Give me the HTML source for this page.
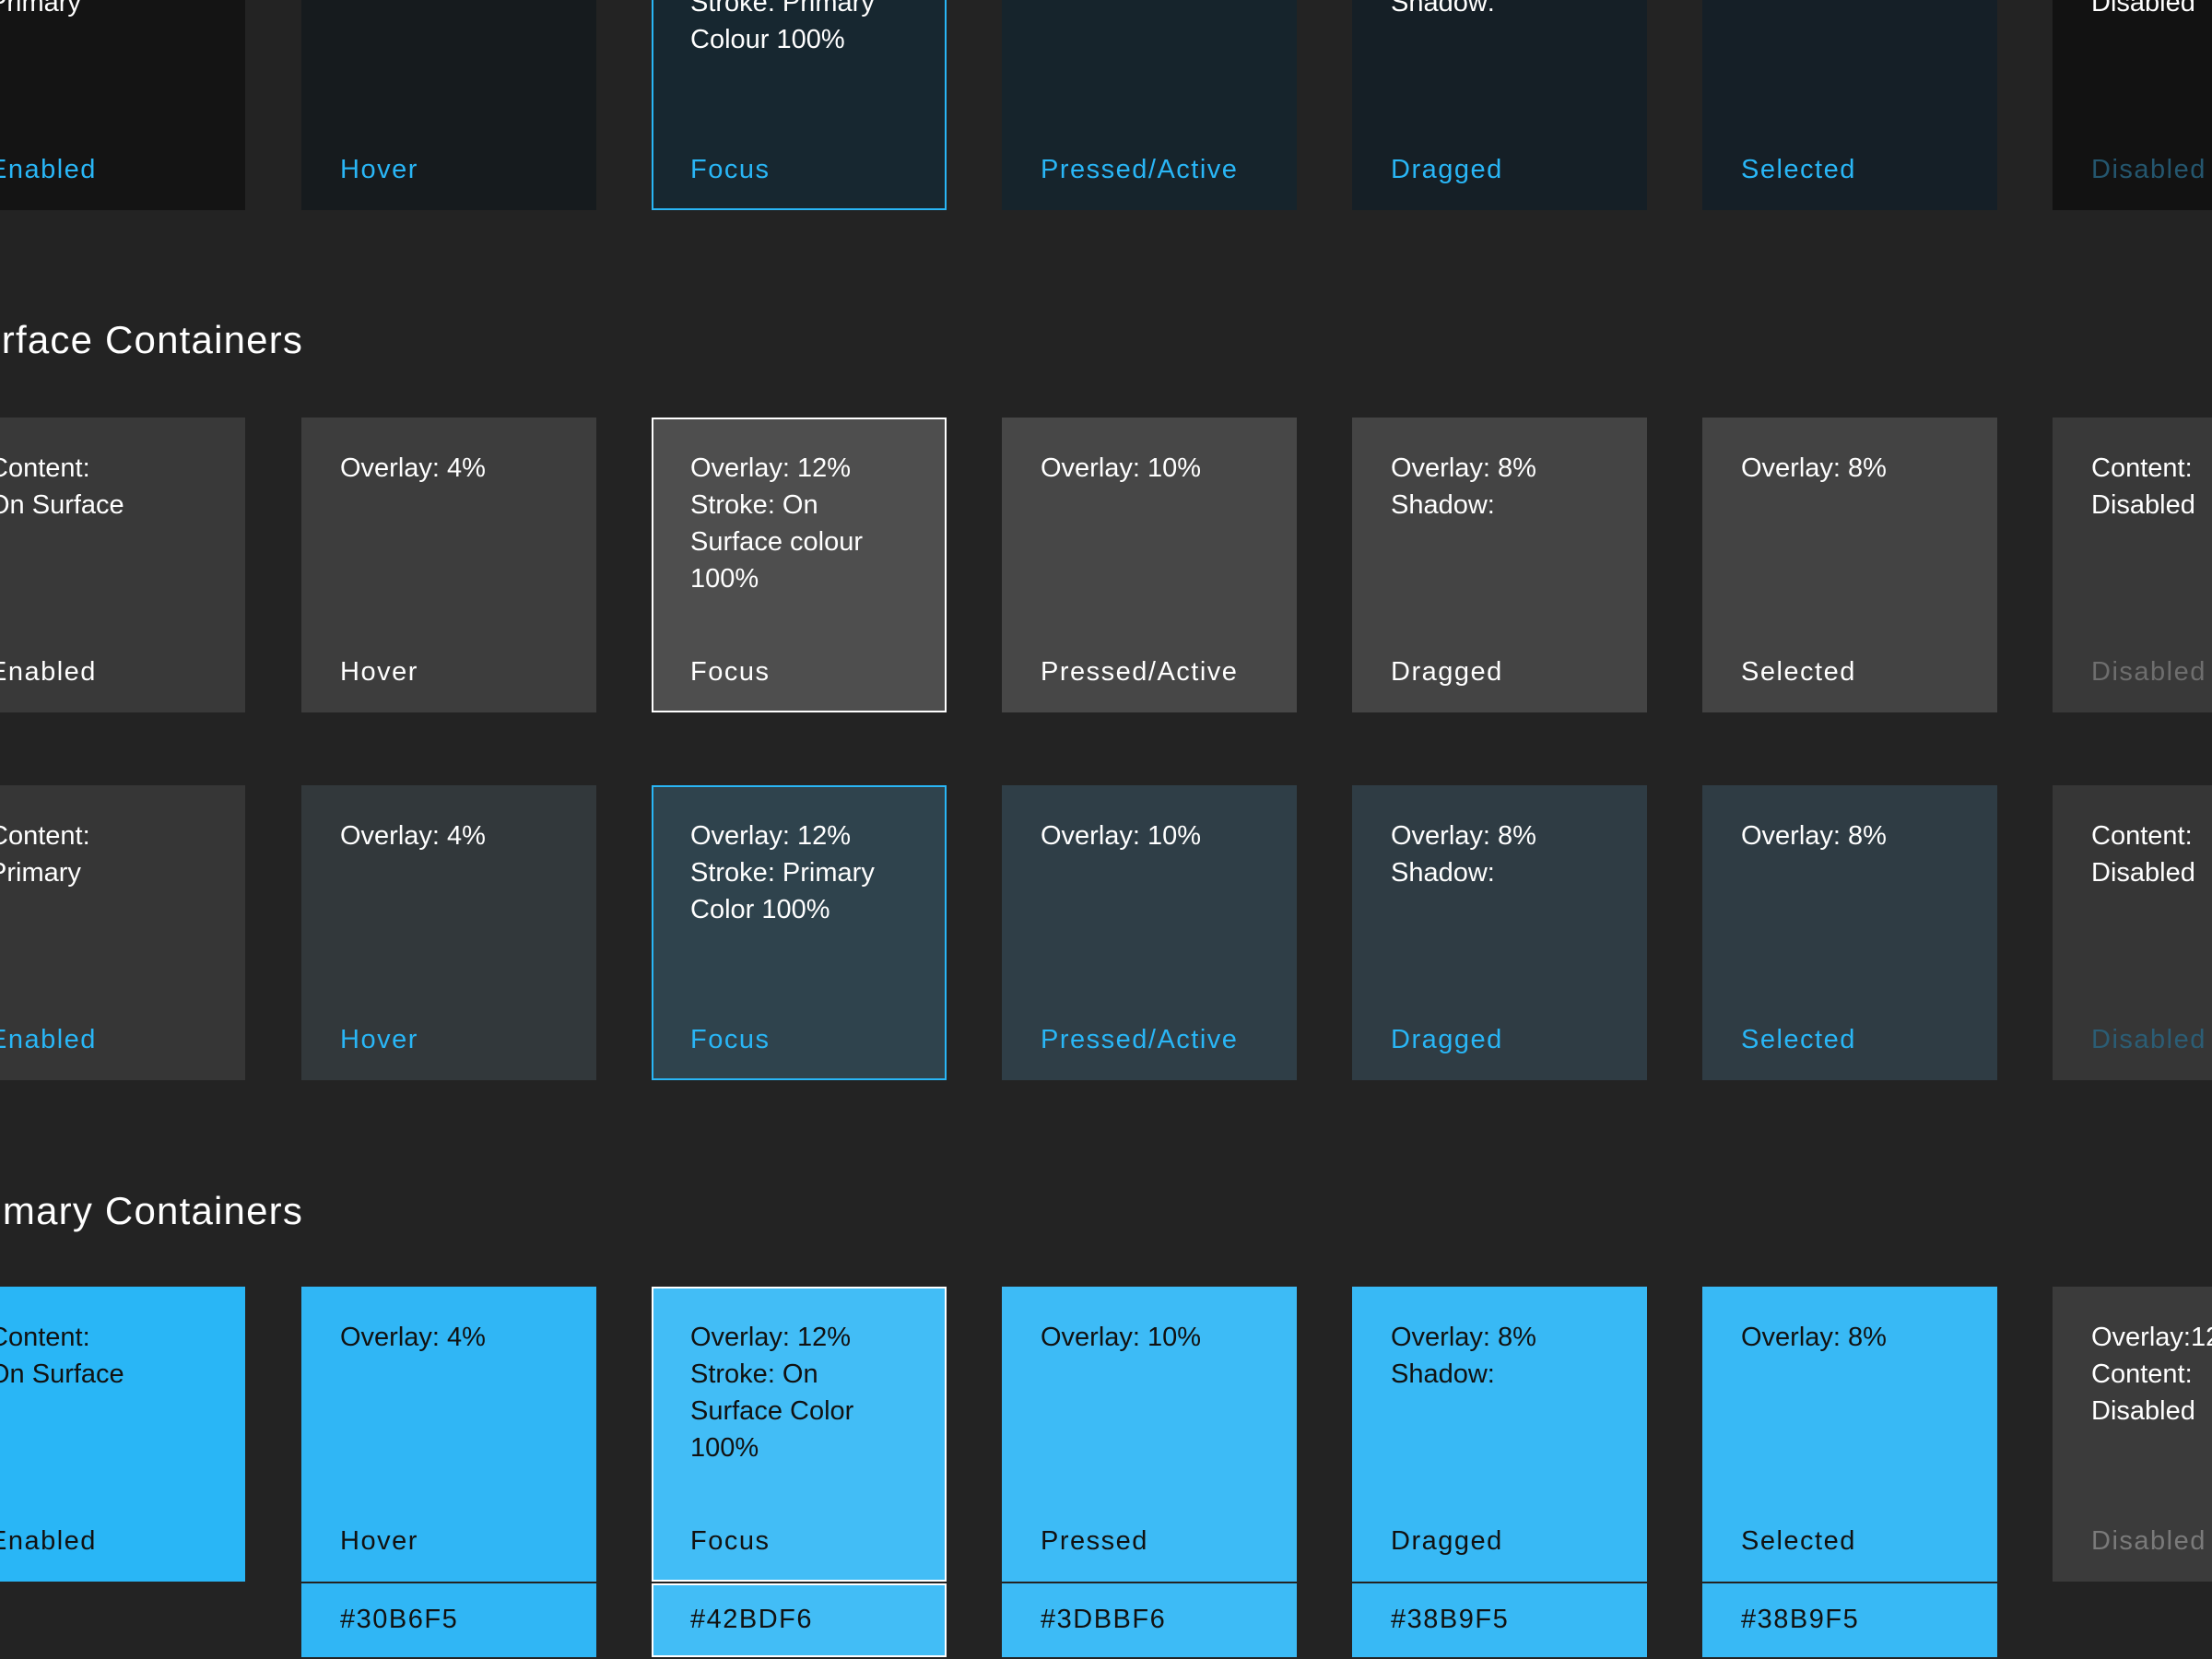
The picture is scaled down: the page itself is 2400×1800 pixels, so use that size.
<!DOCTYPE html>
<html><head><meta charset="utf-8"><style>
html,body{margin:0;padding:0;width:2400px;height:1800px;overflow:hidden;background:#232323;font-family:"Liberation Sans",sans-serif;}
.t{position:absolute;width:320px;height:320px;box-sizing:border-box;color:#fff;font-size:29px;}
.t .top{position:absolute;left:42px;top:35px;line-height:40px;}
.t .bot{position:absolute;left:42px;bottom:24px;line-height:40px;letter-spacing:1.5px;}
.b{color:#29b6f6}
.h{position:absolute;left:-52px;color:#fff;font-size:42px;letter-spacing:1.2px;}
.hex{position:absolute;width:320px;height:80px;box-sizing:border-box;color:#111;font-size:29px;letter-spacing:1.5px;padding-left:42px;line-height:78px;}
.k{color:#111}
</style></head><body>

<!-- Row 1 -->
<div class="t" style="left:-54px;top:-92px;background:#141414"><div class="top">Content:<br>Primary</div><div class="bot b">Enabled</div></div>
<div class="t" style="left:327px;top:-92px;background:#161b1e"><div class="top">Overlay: 4%</div><div class="bot b">Hover</div></div>
<div class="t" style="left:707px;top:-92px;background:#172730;border:2px solid #29b6f6"><div class="top" style="left:40px;top:33px">Overlay: 12%<br>Stroke: Primary<br>Colour 100%</div><div class="bot b" style="left:40px;bottom:22px">Focus</div></div>
<div class="t" style="left:1087px;top:-92px;background:#16242c"><div class="top">Overlay: 10%</div><div class="bot b">Pressed/Active</div></div>
<div class="t" style="left:1467px;top:-92px;background:#151f26"><div class="top">Overlay: 8%<br>Shadow:</div><div class="bot b">Dragged</div></div>
<div class="t" style="left:1847px;top:-92px;background:#151f27"><div class="top">Overlay: 8%</div><div class="bot b">Selected</div></div>
<div class="t" style="left:2227px;top:-92px;background:#121212"><div class="top">Content:<br>Disabled</div><div class="bot" style="color:#24566e">Disabled</div></div>

<div class="h" style="top:345px">Surface Containers</div>

<!-- Row 2 -->
<div class="t" style="left:-54px;top:453px;background:#393939"><div class="top">Content:<br>On Surface</div><div class="bot">Enabled</div></div>
<div class="t" style="left:327px;top:453px;background:#3d3d3d"><div class="top">Overlay: 4%</div><div class="bot">Hover</div></div>
<div class="t" style="left:707px;top:453px;background:#4e4e4e;border:2px solid #fff"><div class="top" style="left:40px;top:33px">Overlay: 12%<br>Stroke: On<br>Surface colour<br>100%</div><div class="bot" style="left:40px;bottom:22px">Focus</div></div>
<div class="t" style="left:1087px;top:453px;background:#474747"><div class="top">Overlay: 10%</div><div class="bot">Pressed/Active</div></div>
<div class="t" style="left:1467px;top:453px;background:#444444"><div class="top">Overlay: 8%<br>Shadow:</div><div class="bot">Dragged</div></div>
<div class="t" style="left:1847px;top:453px;background:#434343"><div class="top">Overlay: 8%</div><div class="bot">Selected</div></div>
<div class="t" style="left:2227px;top:453px;background:#393939"><div class="top">Content:<br>Disabled</div><div class="bot" style="color:#6e6e6e">Disabled</div></div>

<!-- Row 3 -->
<div class="t" style="left:-54px;top:852px;background:#363636"><div class="top">Content:<br>Primary</div><div class="bot b">Enabled</div></div>
<div class="t" style="left:327px;top:852px;background:#32383b"><div class="top">Overlay: 4%</div><div class="bot b">Hover</div></div>
<div class="t" style="left:707px;top:852px;background:#2f434d;border:2px solid #29b6f6"><div class="top" style="left:40px;top:33px">Overlay: 12%<br>Stroke: Primary<br>Color 100%</div><div class="bot b" style="left:40px;bottom:22px">Focus</div></div>
<div class="t" style="left:1087px;top:852px;background:#2f3e47"><div class="top">Overlay: 10%</div><div class="bot b">Pressed/Active</div></div>
<div class="t" style="left:1467px;top:852px;background:#2f3c44"><div class="top">Overlay: 8%<br>Shadow:</div><div class="bot b">Dragged</div></div>
<div class="t" style="left:1847px;top:852px;background:#2f3c44"><div class="top">Overlay: 8%</div><div class="bot b">Selected</div></div>
<div class="t" style="left:2227px;top:852px;background:#363636"><div class="top">Content:<br>Disabled</div><div class="bot" style="color:#2b5d75">Disabled</div></div>

<div class="h" style="top:1290px">Primary Containers</div>

<!-- Row 4 -->
<div class="t k" style="left:-54px;top:1396px;background:#29b6f6"><div class="top">Content:<br>On Surface</div><div class="bot">Enabled</div></div>
<div class="t k" style="left:327px;top:1396px;background:#30b6f5"><div class="top">Overlay: 4%</div><div class="bot">Hover</div></div>
<div class="t k" style="left:707px;top:1396px;background:#42bdf6;border:2px solid #fff"><div class="top" style="left:40px;top:33px">Overlay: 12%<br>Stroke: On<br>Surface Color<br>100%</div><div class="bot" style="left:40px;bottom:22px">Focus</div></div>
<div class="t k" style="left:1087px;top:1396px;background:#3dbbf6"><div class="top">Overlay: 10%</div><div class="bot">Pressed</div></div>
<div class="t k" style="left:1467px;top:1396px;background:#38b9f5"><div class="top">Overlay: 8%<br>Shadow:</div><div class="bot">Dragged</div></div>
<div class="t k" style="left:1847px;top:1396px;background:#38b9f5"><div class="top">Overlay: 8%</div><div class="bot">Selected</div></div>
<div class="t" style="left:2227px;top:1396px;background:#3b3b3b"><div class="top">Overlay:12%<br>Content:<br>Disabled</div><div class="bot" style="color:#7a7a7a">Disabled</div></div>

<div class="hex" style="left:327px;top:1718px;background:#30b6f5">#30B6F5</div>
<div class="hex" style="left:707px;top:1718px;background:#42bdf6;border:2px solid #fff;padding-left:40px;line-height:74px">#42BDF6</div>
<div class="hex" style="left:1087px;top:1718px;background:#3dbbf6">#3DBBF6</div>
<div class="hex" style="left:1467px;top:1718px;background:#38b9f5">#38B9F5</div>
<div class="hex" style="left:1847px;top:1718px;background:#38b9f5">#38B9F5</div>

</body></html>
